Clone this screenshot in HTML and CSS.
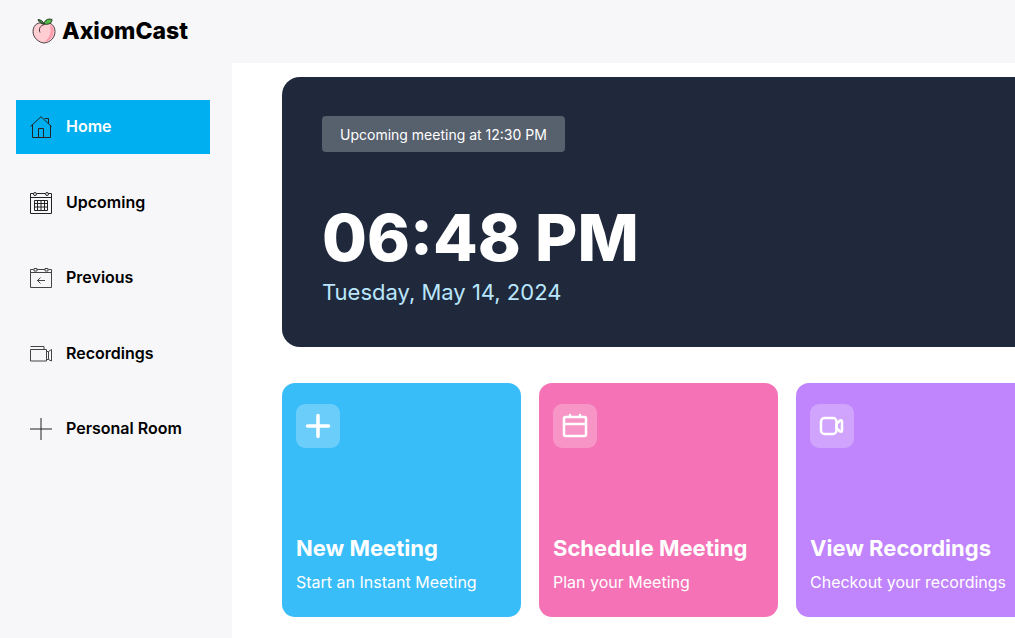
FILE: index.html
```html
<!DOCTYPE html>
<html lang="en">
<head>
<meta charset="utf-8">
<meta name="viewport" content="width=device-width, initial-scale=1">
<title>AxiomCast</title>
<link rel="stylesheet" href="styles.css">
</head>
<body>
<header class="topbar">
  <a class="brand" href="#">
    <svg class="brand-logo" viewBox="0 0 24 26" aria-hidden="true">
      <path d="M12 6C8 3 1 6 1 13.500C1 20 7 24.500 12 25C18 24.500 23 20 23 13.500C23 6 16 3 12 6Z" fill="#ffcdd2" stroke="#4c4045"/>
      <path d="M21 9C23 17 19 23 12 24C17 20 20 16 18 7Z" fill="#ff9dac"/>
      <path d="M12.500 6.500C8 7.500 6.500 11 8 14.500" fill="none" stroke="#493238"/>
      <path d="M12 6C13 1 17 .5 20 1.500C20 5 17 7 12 6Z" fill="#55b947" stroke="#263a25"/>
      <path d="M12 6C9 6 7 4 6 1.500C9 2 11 3 12 6Z" fill="#3d8a3b" stroke="#263a25"/>
    </svg>
    <span>AxiomCast</span>
  </a>
</header>
<div class="layout">
  <nav class="sidebar" aria-label="Main">
    <ul class="nav-list">
      <li><a class="nav-link nav-link-active" href="#" aria-current="page">
        <svg class="nav-icon" viewBox="0 0 22 22" aria-hidden="true"><path d="M.5 10.500 11 .7l10.500 9.800M2.500 9v12.500h18V9M8.500 21.500v-9h5v9M15 3v-.5h3.500v5"/></svg>
        <span>Home</span></a></li>
      <li><a class="nav-link" href="#">
        <svg class="nav-icon" viewBox="0 0 22 22" aria-hidden="true"><path d="M3.500 1.500h-3v20h21v-20h-3M7 1.500h8M.5 5.500h21M4.500 8.500v10h13v-10zM4.500 11.500h13M4.500 15h13M7.500 8.500v10M11 8.500v10M14.500 8.500v10"/><circle cx="5" cy="2" r="1.500"/><circle cx="17" cy="2" r="1.500"/></svg>
        <span>Upcoming</span></a></li>
      <li><a class="nav-link" href="#">
        <svg class="nav-icon nav-icon-soft" viewBox="0 0 22 22" aria-hidden="true"><path d="M3.500 2.500h-3v18h21v-18h-3M7 2.500h8M.5 5.500h21M7 13.500h8M10.500 10.500l-3 3 3 3"/><path d="M4 1.500h3v2.500H4zM15 1.500h3v2.500h-3z"/></svg>
        <span>Previous</span></a></li>
      <li><a class="nav-link" href="#">
        <svg class="nav-icon nav-icon-soft" viewBox="0 0 22 22" aria-hidden="true"><path d="M.5 3.500h13.500v3M.5 6.500h16v11.500H.5zM16.500 8.500h2l3-2V18l-3-1.500h-2M18.500 8.500v8"/></svg>
        <span>Recordings</span></a></li>
      <li><a class="nav-link" href="#">
        <svg class="nav-icon" viewBox="0 0 22 22" aria-hidden="true"><path d="M11 0v22M0 11h22"/></svg>
        <span>Personal Room</span></a></li>
    </ul>
  </nav>
  <main class="content">
    <section class="hero">
      <p class="notice">Upcoming meeting at 12:30 PM</p>
      <div>
        <h1 class="clock">06:48 PM</h1>
        <p class="date">Tuesday, May 14, 2024</p>
      </div>
    </section>
    <section class="cards" aria-label="Actions">
      <button class="card card-blue" type="button">
        <span class="card-icon"><svg viewBox="0 0 28 28" aria-hidden="true"><path class="plus" d="M14 3.500v21M3.500 14h21"/></svg></span>
        <span class="card-text"><span class="card-title">New Meeting</span><span class="card-note">Start an Instant Meeting</span></span>
      </button>
      <button class="card card-pink" type="button">
        <span class="card-icon"><svg viewBox="0 0 28 28" aria-hidden="true"><rect x="3" y="5" width="22" height="19" rx="1.500"/><path d="M3 12h22M9 3V5M19 3V5"/></svg></span>
        <span class="card-text"><span class="card-title">Schedule Meeting</span><span class="card-note">Plan your Meeting</span></span>
      </button>
      <button class="card card-purple" type="button">
        <span class="card-icon"><svg viewBox="0 0 28 28" aria-hidden="true"><rect x="3" y="6" width="15.500" height="16" rx="3.500"/><path d="m18.500 12 3.500-3.500q2-1 2 1v9q0 2-2 1l-3.500-3.500z"/></svg></span>
        <span class="card-text"><span class="card-title">View Recordings</span><span class="card-note">Checkout your recordings</span></span>
      </button>
    </section>
  </main>
</div>
</body>
</html>
```

FILE: styles.css
```css
* { box-sizing: border-box; }
body {
  margin: 0;
  min-height: 100vh;
  display: flex;
  flex-direction: column;
  overflow-x: hidden;
  background: #f7f7f9;
  color: #000;
  font-family: Inter, "Liberation Sans", sans-serif;
}
h1, p, ul { margin: 0; padding: 0; }
a { color: inherit; text-decoration: none; }

.topbar { padding: 16px 32px 17px; }
.brand {
  display: inline-flex;
  align-items: center;
  gap: 6px;
  font-size: 23px;
  line-height: 30px;
  font-weight: 800;
  vertical-align: top;
}
.brand-logo { width: 24px; height: 26px; }

.layout { flex: 1; display: flex; }
.sidebar { flex: 0 0 232px; padding: 37px 22px 16px 16px; }
.nav-list {
  min-height: 356px;
  display: flex;
  flex-direction: column;
  justify-content: space-between;
  list-style: none;
}
.nav-link {
  display: flex;
  align-items: flex-end;
  gap: 14px;
  padding: 14px 14px 16px;
  font-size: 16px;
  line-height: 24px;
  font-weight: 600;
}
.nav-link-active { background: #00aff0; color: #fff; }
.nav-icon {
  width: 22px;
  height: 22px;
  fill: none;
  stroke: #222;
  stroke-width: 1;
}
.nav-icon-soft { stroke: #444; }

.content {
  flex: 1;
  min-width: 0;
  overflow: hidden;
  display: grid;
  grid-template-columns: minmax(753px, 1fr);
  align-content: start;
  gap: 36px;
  padding: 14px 50px 21px;
  background: #fff;
}
.hero {
  min-height: 270px;
  display: flex;
  flex-direction: column;
  align-items: flex-start;
  justify-content: space-between;
  padding: 39px 40px 41px;
  border-radius: 18px;
  background: #1f293b;
  color: #fff;
}
.notice {
  padding: 9px 18px 7px;
  border-radius: 4px;
  background: #57606d;
  font-size: 14px;
  line-height: 20px;
  font-weight: 400;
}
.clock { font-size: 65px; line-height: 65px; font-weight: 800; }
.date {
  padding-top: 8px;
  color: #bae6fd;
  font-size: 22px;
  line-height: 28px;
  font-weight: 400;
}

.cards {
  display: grid;
  grid-template-columns: repeat(3, minmax(239px, 1fr));
  gap: 18px;
}
.card {
  min-height: 234px;
  display: flex;
  flex-direction: column;
  align-items: flex-start;
  justify-content: space-between;
  padding: 21px 14px 23px;
  border: 0;
  border-radius: 13px;
  color: #fff;
  font-family: inherit;
  text-align: left;
  white-space: nowrap;
}
.card-blue { background: #38bdf9; }
.card-pink { background: #f472b5; }
.card-purple { background: #c084fc; }
.card-icon {
  display: grid;
  place-items: center;
  width: 44px;
  height: 44px;
  border-radius: 9px;
  background: rgba(255, 255, 255, 0.25);
}
.card-icon svg {
  width: 28px;
  height: 28px;
  fill: none;
  stroke: #fff;
  stroke-width: 2.5;
  stroke-linecap: round;
  stroke-linejoin: round;
}
.card-icon .plus { stroke-width: 3.5; }
.card-text { display: grid; gap: 8px; }
.card-title { font-size: 22px; line-height: 28px; font-weight: 700; }
.card-note { font-size: 16px; line-height: 24px; font-weight: 400; }
```
